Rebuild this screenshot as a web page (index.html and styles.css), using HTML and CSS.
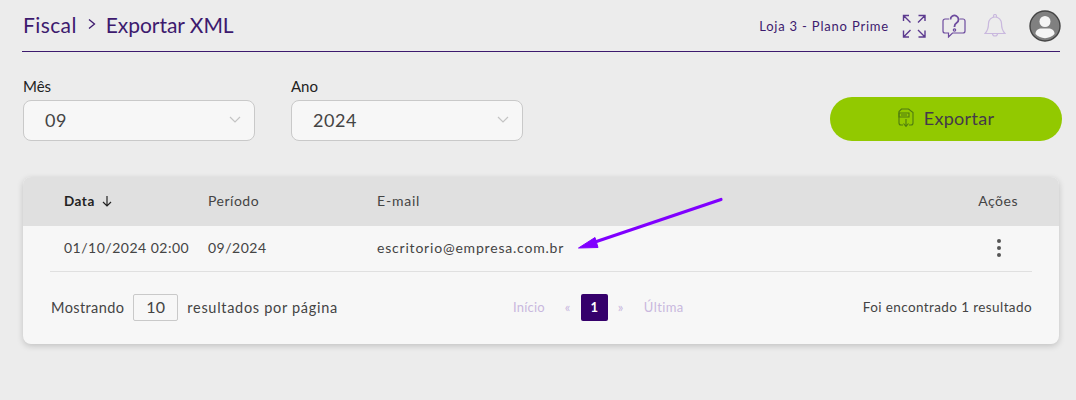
FILE: index.html
```html
<!DOCTYPE html>
<html lang="pt-BR">
<head>
    <meta charset="UTF-8">
    <meta name="viewport" content="width=device-width, initial-scale=1.0">
    <title>Exportar XML</title>
    <link rel="stylesheet" href="styles.css">
</head>
<body>

    <div class="page">
        <header class="topbar">
            <div class="breadcrumb">
                <span>Fiscal</span>
                <svg class="crumb-sep" width="10" height="12" viewBox="0 0 10 12"><path d="M2 1.500 7.500 6 2 10.500" fill="none" stroke="#3d1a6e" stroke-width="1.300"/></svg>
                <span class="crumb-current">Exportar XML</span>
            </div>
            <div class="topbar-right">
                <span class="store">Loja 3 - Plano Prime</span>
                <svg class="icon-expand" width="24" height="24" viewBox="0 0 24 24" fill="none" stroke="#5c3a8f" stroke-width="1.400">
                    <path d="M1.500 7V1.500H7M1.500 1.500l7 7M16.500 1.500H23V7M23 1.500l-7 7M1.500 16.500V23H7M1.500 23l7-7M23 16.500V23h-6.500M23 23l-7-7"/>
                </svg>
                <svg class="icon-help" width="24" height="24" viewBox="0 0 24 24" fill="none" stroke="#6d4b9e" stroke-width="1.200">
                    <path d="M7 5H3A2 2 0 0 0 1 7v10a2 2 0 0 0 2 2h3.500v4l4-4H21a2 2 0 0 0 2-2V7a2 2 0 0 0-2-2h-3.500"/>
                    <path d="M8.500 5.500a4 4 0 1 1 6.200 3.300c-1.500 1-2.200 1.700-2.200 3.700v.5" stroke-width="1.800"/>
                    <circle cx="12.500" cy="16" r="1.200"/>
                </svg>
                <svg class="icon-bell" width="22" height="24" viewBox="0 0 22 24" fill="none" stroke="#c9b8de" stroke-width="1.200">
                    <path d="M11 3a6.500 6.500 0 0 0-6.500 6.500c0 6-1.500 8-3.500 10h20c-2-2-3.500-4-3.500-10A6.500 6.500 0 0 0 11 3Z"/>
                    <path d="M9.500 3V2a1.500 1.500 0 0 1 3 0v1M8.500 19.500a2.500 2.500 0 0 0 5 0"/>
                </svg>
                <svg class="avatar" width="32" height="32" viewBox="0 0 32 32">
                    <circle cx="16" cy="16" r="15" fill="#808080" stroke="#444" stroke-width="1.400"/>
                    <circle cx="16" cy="11.500" r="5.500" fill="#f5f5f5"/>
                    <path d="M6.500 24c0-4 3-5.500 6-5.500h7c3 0 6 1.500 6 5.500a12.800 12.800 0 0 1-19 0Z" fill="#f5f5f5"/>
                </svg>
            </div>
        </header>

        <div class="filters">
            <div class="field">
                <label>Mês</label>
                <div class="select">
                    <span>09</span>
                    <svg width="12" height="7" viewBox="0 0 12 7"><path d="M1 1l5 5 5-5" fill="none" stroke="#c4c4c4" stroke-width="1.200"/></svg>
                </div>
            </div>
            <div class="field">
                <label>Ano</label>
                <div class="select">
                    <span>2024</span>
                    <svg width="12" height="7" viewBox="0 0 12 7"><path d="M1 1l5 5 5-5" fill="none" stroke="#c4c4c4" stroke-width="1.200"/></svg>
                </div>
            </div>
            <button class="btn-export">
                <svg width="16" height="20" viewBox="0 0 16 20" fill="none" stroke="#4f7a10" stroke-width="1.100">
                    <path d="M1 8V3.500L3.500 1h7L15 4.500V15a2 2 0 0 1-2 2h-2M1 8v7a2 2 0 0 0 2 2h2"/>
                    <path d="M1 5h10v4H1zM3 7h6M8 11v7M5.500 15.500 8 18.500l2.500-3"/>
                </svg>
                <span>Exportar</span>
            </button>
        </div>

        <div class="card">
            <div class="table-head row">
                <div class="col-date sorted">Data
                    <svg width="10" height="11" viewBox="0 0 10 11"><path d="M5 0v10M1 6l4 4 4-4" fill="none" stroke="#222" stroke-width="1.200"/></svg>
                </div>
                <div class="col-period">Período</div>
                <div class="col-email">E-mail</div>
                <div class="col-actions">Ações</div>
            </div>
            <div class="table-row row">
                <div class="col-date">01/10/2024 02:00</div>
                <div class="col-period">09/2024</div>
                <div class="col-email">escritorio@empresa.com.br</div>
                <div class="col-actions"><span class="dots"><i></i><i></i><i></i></span></div>
            </div>
            <div class="card-footer">
                <div class="per-page">
                    <span class="per-page-label">Mostrando</span>
                    <span class="per-page-box">10</span>
                    <span>resultados por página</span>
                </div>
                <div class="pager">
                    <span class="pager-first">Início</span>
                    <span class="pager-arrow">«</span>
                    <span class="pager-current">1</span>
                    <span class="pager-arrow">»</span>
                    <span class="pager-last">Última</span>
                </div>
                <div class="total">Foi encontrado 1 resultado</div>
            </div>
        </div>
    </div>

    <!-- annotation drawn over the screenshot -->
    <svg class="annotation" width="160" height="60" viewBox="0 0 160 60">
        <path d="M150 2.500 24 45" fill="none" stroke="#8000ff" stroke-width="3.200" stroke-linecap="round"/>
        <path d="M7.500 51 24 40.500 27 50.500Z" fill="#8000ff" stroke="#8000ff" stroke-linejoin="round"/>
    </svg>

</body>
</html>
```

FILE: styles.css
```css
* {
    box-sizing: border-box;
}
body {
    margin: 0;
    height: 400px;
    overflow: hidden;
    background-color: #ececec;
    font-family: "Lato", "Noto Sans", sans-serif;
    color: #444;
    position: relative;
}
.page {
    padding: 0 14px 0 23px;
}
.topbar {
    display: flex;
    justify-content: space-between;
    align-items: center;
    height: 52px;
    margin-left: -1px;
    margin-right: 2px;
    padding-left: 1px;
    border-bottom: 1px solid #3d1a6e;
}
.breadcrumb {
    display: flex;
    align-items: center;
    gap: 10px;
    padding-bottom: 3px;
    font-size: 21px;
    letter-spacing: 0.4px;
    color: #3d1a6e;
}
.crumb-current {
    margin-left: -1px;
    letter-spacing: -0.05px;
}
.topbar-right {
    display: flex;
    align-items: center;
}
.store {
    font-size: 13px;
    letter-spacing: 0.8px;
    color: #3d1a6e;
    margin-right: 13px;
}
.icon-expand {
    margin-right: 16px;
}
.icon-help {
    margin-right: 18px;
}
.icon-bell {
    margin-right: 23px;
}
.avatar {
    margin-right: -1px;
}
.filters {
    display: flex;
    align-items: flex-end;
    margin-top: 25px;
}
.field {
    width: 232px;
    margin-right: 36px;
}
.field label {
    display: block;
    font-size: 15px;
    color: #222;
    line-height: 18px;
    margin-bottom: 5px;
}
.select {
    display: flex;
    justify-content: space-between;
    align-items: center;
    height: 41px;
    padding: 0 13px 2px 21px;
    background-color: #f7f7f7;
    border: 1px solid #c9c9c9;
    border-radius: 8px;
    font-size: 18px;
    letter-spacing: 0.6px;
}
.btn-export {
    display: flex;
    align-items: center;
    justify-content: center;
    gap: 10px;
    width: 232px;
    height: 44px;
    padding-bottom: 4px;
    margin-left: auto;
    border: none;
    border-radius: 22px;
    background-color: #92c900;
    color: #443a4a;
    font-family: inherit;
    font-size: 18px;
    letter-spacing: 0.3px;
}
.card {
    width: 1036px;
    height: 167px;
    margin-top: 36px;
    background-color: #f7f7f7;
    border-radius: 8px;
    box-shadow: 0 2px 6px rgba(0, 0, 0, 0.18);
    overflow: hidden;
}
.row {
    display: flex;
    align-items: center;
    font-size: 14px;
    letter-spacing: 0.5px;
}
.table-head {
    height: 49px;
    padding: 0 41px 2px;
    background-color: #e0e0e0;
}
.table-row {
    height: 46px;
    margin: 0 27px;
    padding: 0 14px 2px;
    border-bottom: 1px solid #e0e0e0;
}
.col-date {
    width: 144px;
    white-space: nowrap;
}
.col-period {
    width: 169px;
}
.col-email {
    flex: 1;
    letter-spacing: 0.8px;
}
.col-actions {
    text-align: right;
}
.sorted {
    font-weight: 700;
    font-size: 13.500px;
    color: #222;
}
.sorted svg {
    margin-left: 3px;
    vertical-align: -1px;
}
.dots {
    display: flex;
    flex-direction: column;
    gap: 3px;
    margin-right: 17px;
}
.dots i {
    width: 4px;
    height: 4px;
    border-radius: 50%;
    background-color: #555;
}
.card-footer {
    display: flex;
    align-items: center;
    justify-content: space-between;
    position: relative;
    height: 72px;
    padding: 0 27px 2px 28px;
    font-size: 13.500px;
    letter-spacing: 0.4px;
}
.per-page {
    display: flex;
    align-items: center;
    gap: 9px;
    font-size: 14.500px;
    letter-spacing: 0.7px;
}
.per-page-label {
    letter-spacing: 0.4px;
}
.per-page-box {
    width: 45px;
    height: 27px;
    line-height: 23px;
    text-align: center;
    background-color: #f7f7f7;
    border: 1px solid #c9c9c9;
    border-radius: 2px;
    font-size: 16px;
    letter-spacing: 0.2px;
}
.pager {
    position: absolute;
    left: 490px;
    display: flex;
    align-items: center;
    gap: 10px;
    font-size: 13px;
    letter-spacing: 0.2px;
    color: #c9b8de;
}
.pager-first {
    margin-right: 10px;
}
.pager-last {
    margin-left: 10px;
    letter-spacing: 0.4px;
}
.pager-arrow {
    width: 6px;
    font-size: 13px;
}
.pager-current {
    width: 27px;
    height: 27px;
    line-height: 27px;
    text-align: center;
    background-color: #35006b;
    border-radius: 2px;
    color: #fff;
    font-weight: 700;
}
.annotation {
    position: absolute;
    left: 571px;
    top: 197px;
}
```
